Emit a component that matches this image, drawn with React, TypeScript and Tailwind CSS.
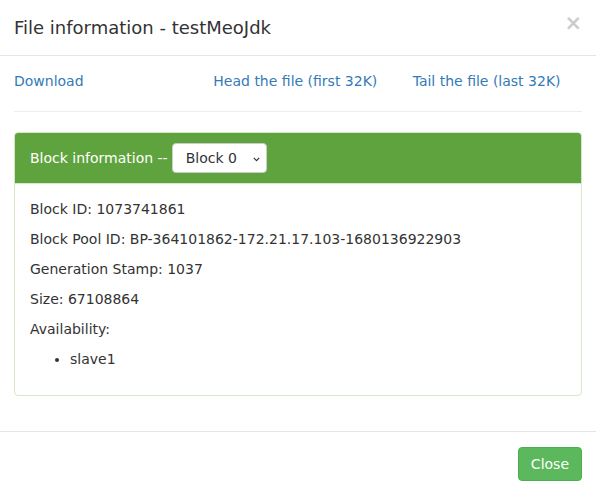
import { useState } from 'react';

const blockInfo = [
  { label: 'Block ID', value: '1073741861' },
  { label: 'Block Pool ID', value: 'BP-364101862-172.21.17.103-1680136922903' },
  { label: 'Generation Stamp', value: '1037' },
  { label: 'Size', value: '67108864' },
];

const locations = ['slave1'];

export default function App() {
  const [block, setBlock] = useState('0');

  return (
    <div className="min-h-[493px] overflow-hidden bg-white">
      {/* modal content sits 1px past the left edge of the frame */}
      <div className="-mx-[1px] font-['DejaVu_Sans',sans-serif] text-[14px] leading-[20px] text-[#333]">
        {/* header */}
        <div className="flex items-start justify-between border-b border-[#e5e5e5] p-[15px]">
          <h4 className="text-[18px] leading-[25px]">File information - testMeoJdk</h4>
          <button
            type="button"
            className="-mt-[2px] text-[21px] font-bold leading-none text-black opacity-20 [text-shadow:0_1px_0_#fff]"
            aria-label="Close"
          >
            ×
          </button>
        </div>

        {/* body */}
        <div className="p-[15px]">
          <div className="grid grid-cols-3 gap-x-[30px]">
            <a href="#" className="text-[#337ab7]">Download</a>
            <a href="#" className="text-[#337ab7]">Head the file (first 32K)</a>
            <a href="#" className="text-[#337ab7]">Tail the file (last 32K)</a>
          </div>

          <hr className="my-[20px] border-t border-[#eee]" />

          <div className="mb-[20px] rounded-[4px] border border-[#d6e9c6]">
            <div className="flex items-center gap-[4px] rounded-t-[3px] border-b border-[#d6e9c6] bg-[#5fa33e] px-[15px] py-[10px] text-white">
              <span>Block information --</span>
              <div className="relative">
                <select
                  value={block}
                  onChange={(e) => setBlock(e.target.value)}
                  className="h-[30px] w-[95px] appearance-none rounded-[4px] border border-[#ccc] bg-white pl-[13px] text-[14px] text-[#333] outline-none"
                >
                  <option value="0">Block 0</option>
                </select>
                <svg
                  className="pointer-events-none absolute right-[7px] top-[14px]"
                  width="7"
                  height="5"
                  viewBox="0 0 7 5"
                  fill="none"
                >
                  <path d="M0.8 0.8 L3.5 3.6 L6.2 0.8" stroke="#333" strokeWidth="1.2" />
                </svg>
              </div>
            </div>

            <div className="px-[15px] pt-[15px] pb-[16px]">
              {blockInfo.map((row) => (
                <p key={row.label} className="mb-[10px]">
                  {row.label}: {row.value}
                </p>
              ))}
              <p className="mb-[10px]">Availability:</p>
              <ul className="mt-[1px] mb-[10px] list-disc pl-[40px]">
                {locations.map((loc) => (
                  <li key={loc}>{loc}</li>
                ))}
              </ul>
            </div>
          </div>
        </div>

        {/* footer */}
        <div className="flex justify-end border-t border-[#e5e5e5] p-[15px]">
          <button
            type="button"
            className="rounded-[4px] border border-[#4cae4c] bg-[#5cb85c] px-[12px] py-[6px] text-white"
          >
            Close
          </button>
        </div>
      </div>
    </div>
  );
}
